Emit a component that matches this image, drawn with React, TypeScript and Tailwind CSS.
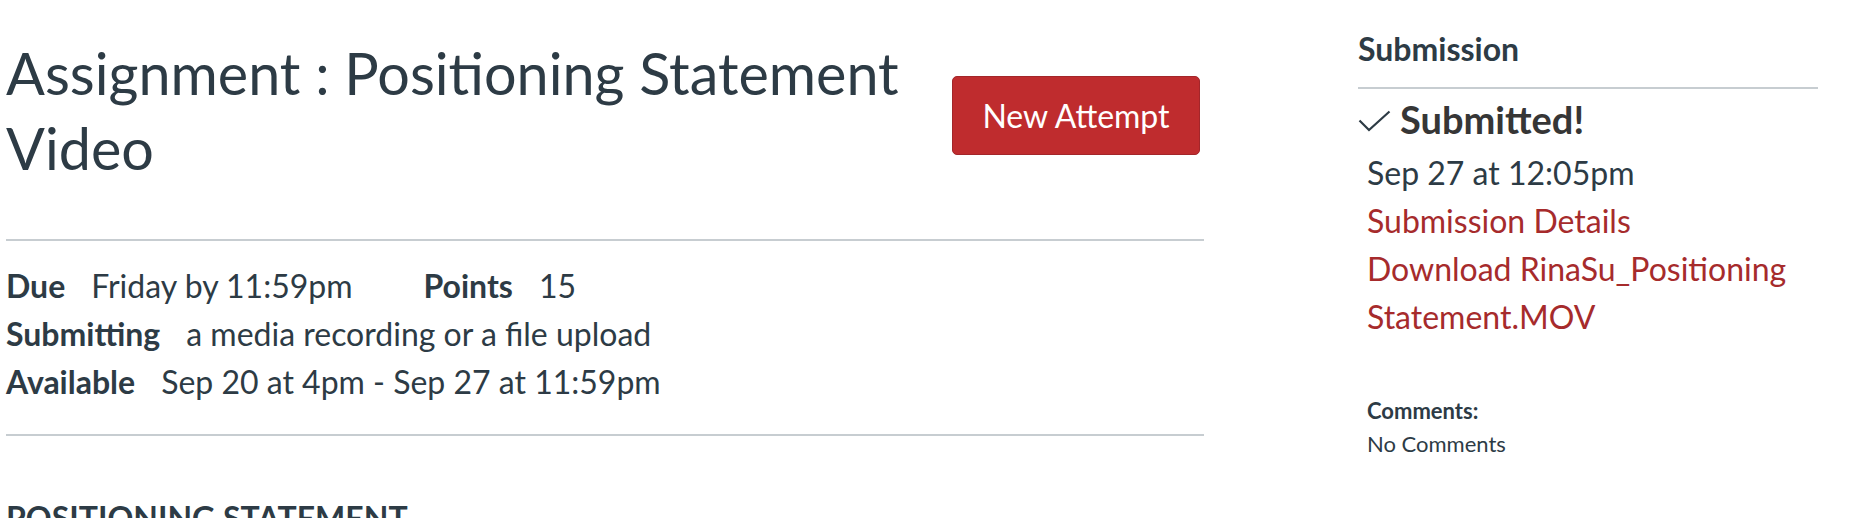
import React from "react";

export default function App() {
  return (
    <div className="w-[1854px] h-[518px] overflow-hidden bg-white font-['Lato','Liberation_Sans',sans-serif] text-[#2d3b45]">
      <div className="flex">
        {/* Main column */}
        <div className="ml-[6px] w-[1198px] shrink-0">
          <div className="flex items-start justify-between pt-[35px]">
            <h1 className="text-[57.5px] leading-[75px] font-normal w-[940px]">
              Assignment : Positioning Statement Video
            </h1>
            <button className="mt-[41px] mr-[4px] w-[248px] h-[79px] shrink-0 rounded-[5px] bg-[#bf2c2e] border border-[#a3262a] text-white text-[32px] leading-[48px]">
              New Attempt
            </button>
          </div>
          <div className="mt-[54px] h-[2px] bg-[#c7cdd1]" />
          <div className="pt-[21px] pb-[28px] text-[32px] leading-[48px]">
            <div className="flex">
              <div className="flex">
                <span className="font-bold mr-[26px]">Due</span>
                <span>Friday by 11:59pm</span>
              </div>
              <div className="flex ml-[71px]">
                <span className="font-bold mr-[26px]">Points</span>
                <span>15</span>
              </div>
            </div>
            <div className="flex">
              <span className="font-bold mr-[26px]">Submitting</span>
              <span>a media recording or a file upload</span>
            </div>
            <div className="flex">
              <span className="font-bold mr-[26px]">Available</span>
              <span>Sep 20 at 4pm - Sep 27 at 11:59pm</span>
            </div>
          </div>
          <div className="h-[2px] bg-[#c7cdd1]" />
          <div className="mt-[58px] text-[32px] leading-[48px] font-bold uppercase">
            Positioning Statement
          </div>
        </div>

        {/* Sidebar */}
        <div className="ml-[154px] w-[460px] shrink-0 pt-[28px]">
          <h2 className="text-[32px] leading-[42px] font-bold">Submission</h2>
          <div className="mt-[17px] h-[2px] bg-[#c7cdd1]" />
          <div className="mt-[6px] flex items-center h-[48px]">
            <svg width="33" height="22" viewBox="0 0 33 22" className="mt-[4px] shrink-0">
              <path d="M1.5 10.5 L11 20 L31.5 1.5" fill="none" stroke="#2d3b45" strokeWidth="2.2" />
            </svg>
            <span className="ml-[9px] text-[38px] leading-[48px] font-bold text-[#363636]">Submitted!</span>
          </div>
          <div className="pl-[9px] mt-[6px] text-[32px] leading-[48px]">
            <div>Sep 27 at 12:05pm</div>
            <div className="text-[#a62b2c]">Submission Details</div>
            <div className="text-[#a62b2c]">Download RinaSu_Positioning Statement.MOV</div>
            <div className="mt-[53px] text-[22px] leading-[33px] font-bold">Comments:</div>
            <div className="text-[22px] leading-[33px]">No Comments</div>
          </div>
        </div>
      </div>
    </div>
  );
}
